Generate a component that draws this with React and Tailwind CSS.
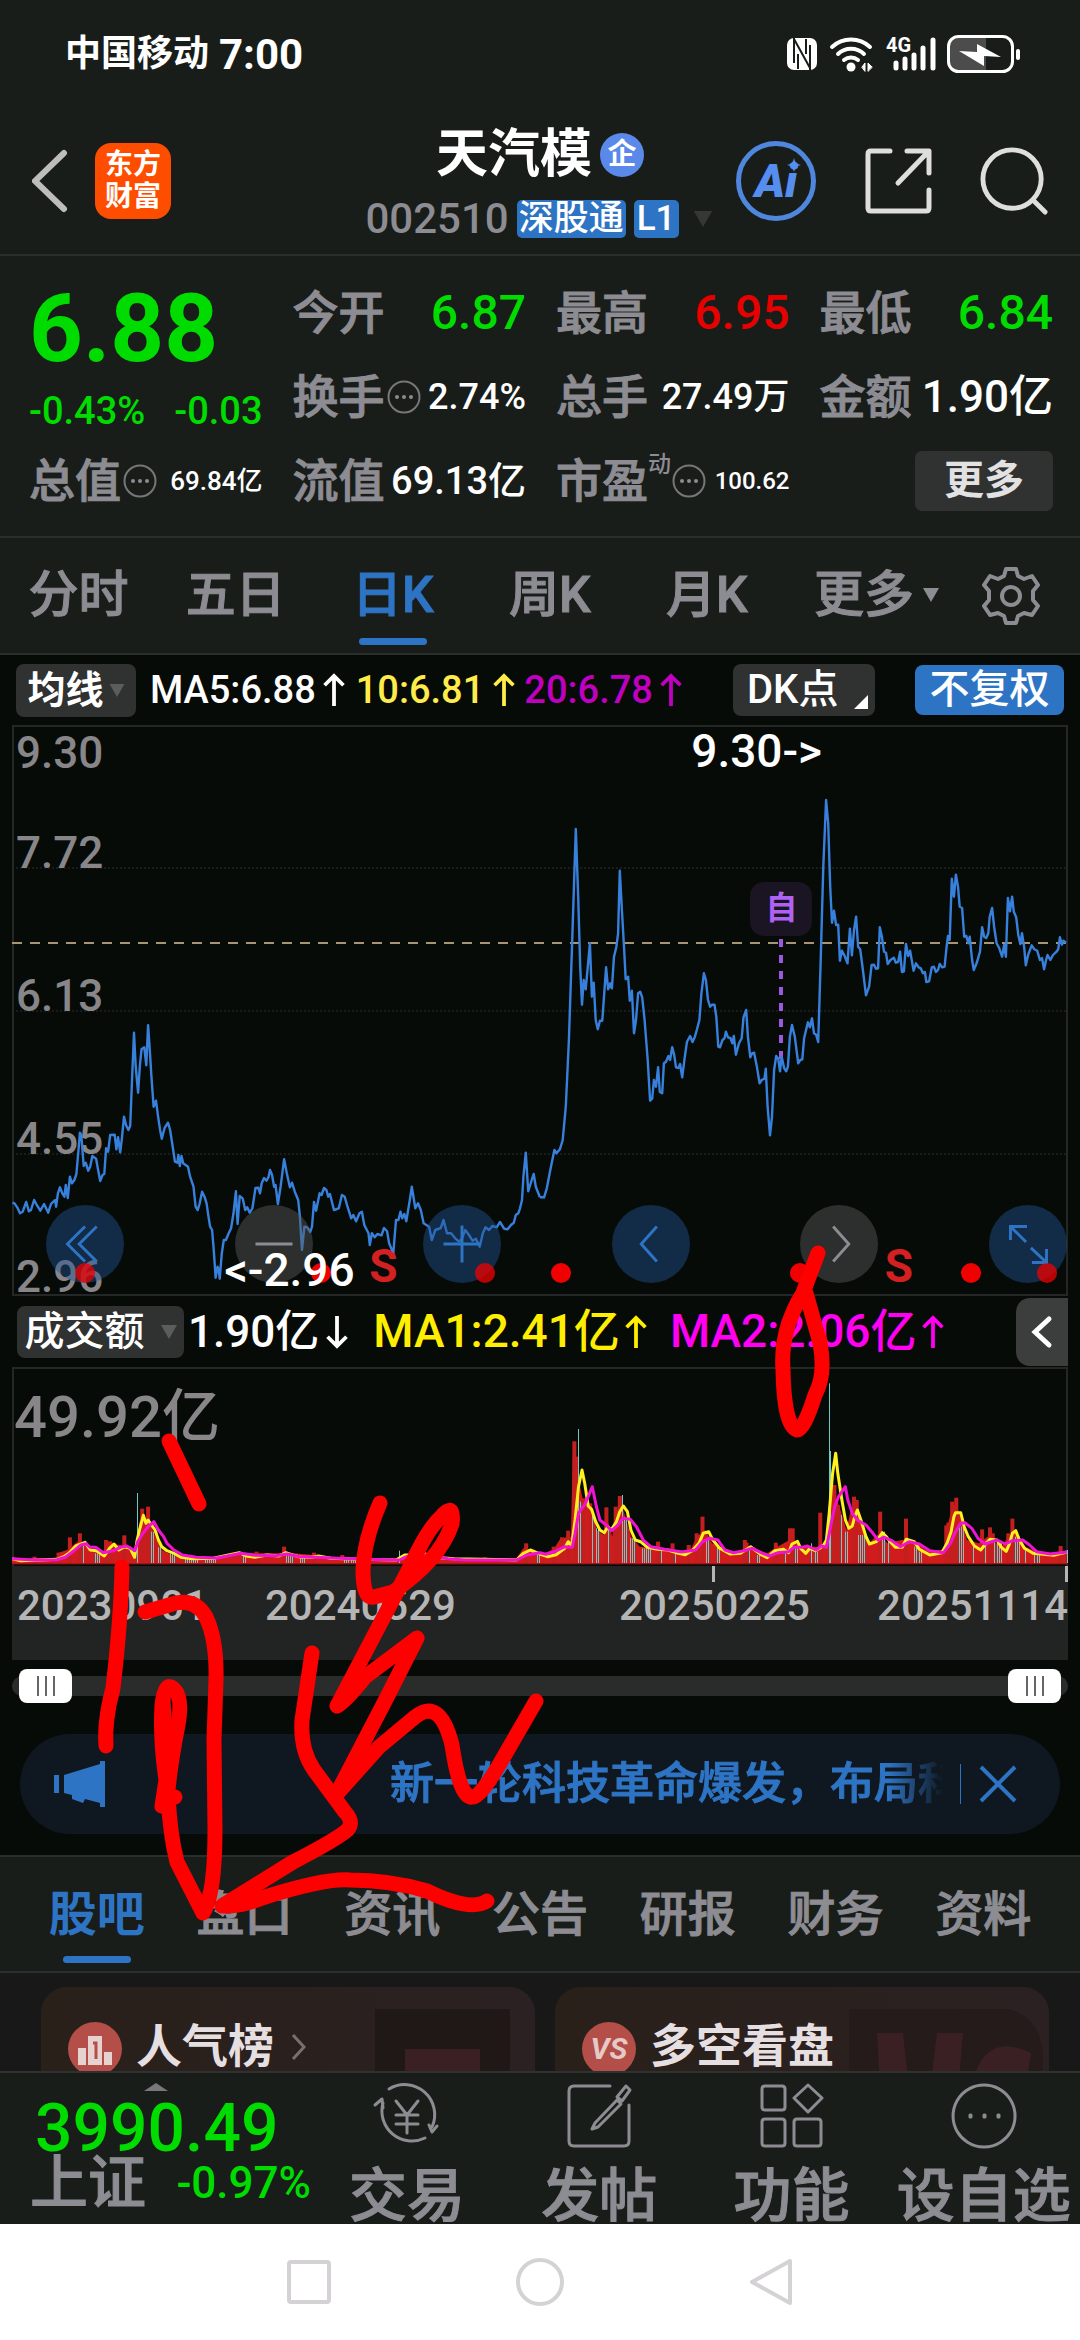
import React, { useState } from 'react'

const QUOTES = [
  { label: '今开', value: '6.87', style: 'text-[48px] text-[#00dc00]' },
  { label: '最高', value: '6.95', style: 'text-[48px] text-[#e60000]' },
  { label: '最低', value: '6.84', style: 'text-[48px] text-[#00dc00]' },
  { label: '换手', value: '2.74%', more: true, style: 'text-[36px] text-white' },
  { label: '总手', value: '27.49万', style: 'text-[36px] text-white' },
  { label: '金额', value: '1.90亿', style: 'text-[44px] text-white' },
  { label: '总值', value: '69.84亿', more: true, style: 'text-[26px] text-white' },
  { label: '流值', value: '69.13亿', style: 'text-[38px] text-white' },
  { label: '市盈', value: '100.62', more: true, sup: '动', style: 'text-[24px] text-white' }
]

const PERIODS = ['分时', '五日', '日K', '周K', '月K', '更多']
const SECTIONS = ['股吧', '盘口', '资讯', '公告', '研报', '财务', '资料']

// Chart samples sit on a 3x grid: [x, y, x, y, ...]
const PRICE_A = [36,608,42,610,50,622,58,640,66,635,76,606,84,634,90,630,99,600,108,617,117,632,128,612,140,638,148,612,155,605,160,600,163,620,168,580,174,562,181,580,187,590,191,555,197,594,203,530,209,550,216,540,222,522,228,450,232,398,236,405,243,498,249,488,256,512,262,500,268,468,279,476,284,505,291,543,298,525,303,522,308,445,314,455,320,405,333,404,338,448,343,412,349,457,354,415,360,350,366,375,373,390,378,378,383,250,389,98,394,200,401,278,406,200,411,148,419,142,425,196,430,76,435,150,439,220,446,320,453,302,459,350,465,390,470,416,478,384,488,368,494,390,500,430,508,485,515,488,518,465,522,498,527,468,532,490,546,500,552,530,562,560,568,620,574,630,580,610,587,575,594,590,600,610,604,640,610,680,616,690,620,740,624,800,626,833,632,800,635,808,638,836,644,760,650,720,656,720,664,700,671,685,678,640,685,574,690,672,696,588,705,596,712,630,718,622,725,638,733,625,742,564,750,563,755,580,760,550,767,534,774,542,780,530,784,510,790,524,796,560,800,555,807,612,815,560,825,478,833,520,842,562,848,548,856,575,866,600,871,650,877,750,884,680,892,682,901,696,906,680,912,606,918,632,928,580,934,585,941,564,948,570,953,590,958,582,970,630,984,625,993,585,1001,590,1009,620,1020,655,1026,645,1034,664,1044,640,1051,635,1058,675,1070,700,1074,735,1080,700,1088,712,1096,702,1108,706,1115,684,1124,694,1130,730,1142,760,1150,660,1157,660,1163,635,1168,655,1174,642,1180,664,1190,600,1196,560,1206,625,1214,610,1222,630,1230,670,1246,680,1254,720,1264,690,1280,684,1288,660,1298,700,1310,700,1322,715,1333,725,1342,715,1351,690,1362,705,1372,722,1382,716,1393,740,1402,700,1410,682,1420,690,1430,678,1442,682,1452,666,1464,686,1474,688,1484,675,1492,668,1498,645,1505,640,1510,625,1516,600,1520,530,1527,458,1534,574,1544,540,1550,522,1556,560,1568,592]
const PRICE_B = [0,1252,12,1252,20,1225,30,1170,42,1110,48,1120,58,1108,66,1080,75,980,84,780,93,500,104,147,111,350,117,560,122,674,127,600,133,628,139,560,145,490,151,650,156,608,162,720,168,748,174,722,181,722,186,650,192,562,198,628,204,610,209,625,215,530,222,500,227,460,232,272,238,390,244,500,249,598,256,590,261,662,267,632,273,760,279,720,285,640,291,635,297,652,304,720,313,840,320,962,326,956,331,900,337,920,343,862,348,936,355,940,360,850,366,845,373,828,378,840,384,802,390,825,395,862,402,864,407,852,413,892,420,835,427,785,436,768,443,786,450,770,456,748,463,720,469,640,476,580,482,600,488,660,494,680,500,674,507,674,512,710,518,800,523,802,530,780,536,775,540,755,546,772,553,774,559,790,563,768,569,824,578,790,586,775,591,712,599,690,604,770,611,832,616,820,622,818,630,860,638,910,644,900,652,896,656,866,661,980,668,1066,674,1010,680,870,686,828,692,836,697,874,702,830,709,864,715,874,720,860,726,770,732,735,740,770,750,850,756,840,762,838,767,775,778,727,784,742,790,715,796,760,802,764,808,786,815,550,823,260,831,60,837,130,843,320,848,428,854,392,860,435,866,434,871,542,877,512,885,528,893,550,900,446,906,526,912,450,918,410,924,500,930,508,938,570,947,646,956,620,963,555,970,554,976,566,982,565,987,442,993,470,999,515,1005,518,1010,552,1018,540,1028,533,1033,548,1040,546,1046,515,1051,576,1057,574,1063,492,1069,528,1075,512,1085,572,1092,550,1100,562,1106,565,1112,580,1118,576,1122,606,1130,604,1138,562,1144,560,1150,576,1156,570,1161,552,1168,562,1175,560,1181,500,1185,468,1190,480,1196,296,1202,350,1208,284,1214,320,1219,380,1226,384,1232,470,1238,468,1244,490,1248,470,1255,540,1260,570,1268,550,1278,515,1284,442,1290,470,1296,474,1302,460,1306,410,1313,384,1319,440,1326,490,1334,505,1342,530,1348,495,1353,530,1359,354,1365,394,1371,350,1376,395,1383,412,1389,465,1395,492,1400,460,1406,500,1411,556,1418,524,1428,496,1436,508,1444,512,1452,540,1458,534,1464,568,1470,540,1474,525,1482,540,1490,525,1500,515,1505,508,1510,472,1516,494,1520,482,1528,488]

const VOL_AREA = [35,660,100,655,165,655,170,638,195,630,225,605,255,612,265,628,300,640,305,605,345,615,368,618,390,640,398,610,405,545,425,540,440,560,455,600,470,630,500,645,560,655,640,650,700,640,740,640,820,640,850,640,910,645,1000,655,1150,658,1180,645,1260,645,1300,655,1500,655,1520,625,1545,630,1568,645,1608,628,1628,595,1658,590,1663,350,1676,400,1693,480,1718,500,1733,570,1753,585,1758,520,1778,590,1783,540,1803,480,1813,520,1833,590,1858,620,1908,625,1988,632,2008,625,2023,590,2048,570,2068,610,2128,635,2188,625,2228,640,2258,620,2293,600,2328,620,2368,620,2398,620,2406,500,2418,450,2438,500,2458,570,2473,500,2498,540,2523,610,2553,580,2578,610,2618,600,2648,600,2688,630,2743,630,2751,560,2768,490,2783,510,2808,600,2843,610,2868,590,2908,620,2928,590,2948,570,2978,620,3018,640,3098,635]
const VOL_UP = [[100,650],[170,638],[203,592],[232,580],[308,600],[320,604],[361,586],[413,506],[430,500],[452,605],[745,635],[825,620],[912,638],[994,645],[1408,652],[1528,610],[1608,620],[1632,592],[1650,572],[1668,304],[1673,350],[1695,475],[1714,490],[1761,502],[1788,500],[1800,468],[1911,605],[1953,610],[2000,615],[2023,580],[2040,530],[2163,600],[2168,608],[2253,608],[2294,565],[2302,565],[2382,518],[2423,435],[2433,495],[2480,470],[2488,480],[2556,515],[2631,536],[2748,556],[2754,548],[2765,485],[2777,473],[2852,568],[2875,562],[2883,580],[2928,580],[2940,536],[3080,618]]
// [from, to, top]
const VOL_DOWN = [[240,240,612],[276,288,640],[397,397,459],[438,444,575],[460,466,622],[494,508,640],[536,572,655],[594,624,656],[705,711,645],[830,850,645],[870,884,652],[1000,1030,655],[1158,1158,632],[1225,1235,650],[1558,1566,645],[1679,1679,267],[1685,1685,485],[1720,1720,520],[1732,1738,565],[1766,1766,560],[1807,1807,465],[1813,1819,540],[1830,1842,595],[1864,1888,625],[1920,1920,625],[1960,1960,635],[2050,2058,600],[2082,2090,620],[2174,2174,620],[2198,2204,645],[2280,2280,640],[2308,2314,620],[2354,2354,610],[2368,2374,635],[2406,2406,130],[2411,2411,333],[2441,2441,525],[2453,2459,575],[2492,2510,585],[2562,2568,575],[2580,2580,600],[2655,2661,620],[2668,2674,635],[2785,2797,560],[2826,2826,620],[2860,2860,605],[2888,2906,605],[2948,2960,590],[2978,2978,630],[3004,3018,640],[3098,3098,630]]
const VOL_MA1 = [35,656,60,662,120,660,165,658,185,650,200,640,220,618,247,607,262,630,280,632,303,648,318,625,331,612,345,630,362,620,378,625,391,652,398,600,405,570,416,526,424,550,430,540,440,555,450,570,460,600,470,620,485,632,505,640,525,652,560,656,620,655,660,646,695,638,715,648,740,652,775,645,810,648,830,638,850,645,875,652,905,652,925,648,960,655,1000,656,1050,658,1150,660,1175,645,1200,645,1235,642,1260,652,1320,656,1500,660,1520,640,1540,630,1568,642,1590,650,1615,644,1640,625,1650,605,1660,618,1670,540,1680,440,1690,390,1698,430,1708,498,1718,508,1730,545,1742,570,1755,578,1765,560,1775,570,1790,545,1800,515,1810,498,1822,515,1832,570,1845,600,1860,605,1880,622,1910,628,1940,630,1970,640,1990,644,2010,632,2030,610,2042,580,2058,575,2070,600,2090,625,2120,642,2150,640,2165,630,2180,620,2195,632,2212,645,2228,653,2250,632,2275,628,2290,638,2300,612,2316,604,2325,625,2340,640,2352,625,2368,632,2380,625,2392,615,2400,600,2408,520,2418,400,2427,340,2433,400,2445,480,2455,540,2465,565,2475,558,2482,530,2490,510,2500,540,2515,590,2525,612,2545,605,2562,578,2572,588,2585,605,2600,622,2620,622,2632,598,2655,605,2670,628,2700,645,2735,638,2750,610,2762,575,2770,530,2775,518,2790,518,2800,560,2812,590,2830,618,2848,630,2862,612,2875,598,2895,600,2908,622,2922,634,2932,610,2940,580,2950,572,2960,600,2975,625,3000,640,3060,646,3098,636]
const VOL_MA2 = [35,656,100,660,165,659,190,652,215,632,235,615,250,611,262,622,278,622,300,638,330,632,350,622,368,618,392,632,400,605,415,580,430,560,447,545,460,570,475,590,485,610,505,630,530,645,570,652,630,654,660,648,700,640,740,646,800,647,835,642,870,650,920,652,980,655,1060,658,1160,660,1180,650,1240,645,1300,656,1350,660,1500,660,1530,645,1568,638,1585,643,1610,635,1640,620,1662,622,1670,580,1680,520,1700,490,1720,440,1732,500,1742,540,1760,555,1776,572,1795,555,1808,535,1830,538,1848,560,1868,600,1890,620,1930,628,1980,636,2020,630,2040,605,2060,595,2085,600,2105,630,2130,638,2160,632,2185,625,2215,640,2235,648,2260,638,2290,635,2305,622,2330,622,2345,618,2370,630,2385,618,2400,622,2412,560,2424,500,2435,470,2455,440,2462,480,2475,520,2490,540,2515,555,2535,580,2550,600,2568,592,2590,602,2615,620,2640,605,2670,612,2700,632,2740,638,2760,610,2775,575,2790,550,2802,548,2822,565,2840,595,2860,612,2895,600,2920,612,2940,602,2970,600,2990,615,3010,635,3050,642,3098,636]

const plot = (samples, dx, dy) => {
  const out = []
  for (let i = 0; i < samples.length; i += 2) {
    out.push(`${((samples[i] + dx) / 2.904 - 12).toFixed(1)},${(samples[i + 1] / 3 + dy).toFixed(1)}`)
  }
  return out.join(' ')
}

const Caret = ({ className }) => (
  <svg viewBox="0 0 16 14" className={className} fill="currentColor"><path d="M0 0h16L8 14z" /></svg>
)

const Arrow = ({ down }) => (
  <svg viewBox="0 0 24 36" className="w-[24px] h-[34px] shrink-0" fill="none" stroke="currentColor" strokeWidth="4">
    <path d={down ? 'M12 1v32M2 23l10 10 10-10' : 'M12 35V3M2 13L12 3l10 10'} />
  </svg>
)

const MoreDots = () => (
  <svg viewBox="0 0 34 34" className="w-[34px] h-[34px] shrink-0" fill="none" stroke="#77777a" strokeWidth="2">
    <circle cx="17" cy="17" r="15.5" />
    <g fill="#8c8c92" stroke="none"><circle cx="10" cy="17" r="2" /><circle cx="17" cy="17" r="2" /><circle cx="24" cy="17" r="2" /></g>
  </svg>
)

const StatusBar = () => (
  <div className="h-[108px] pl-[65px] pr-[59px] flex items-center justify-between text-white font-bold">
    <div className="flex items-center gap-[10px]">
      <span className="text-[36px]">中国移动</span>
      <span className="text-[42px]">7:00</span>
    </div>
    <div className="flex items-center gap-[11px]">
      <svg viewBox="0 0 32 34" className="w-[32px] h-[34px]">
        <rect x="1" y="1" width="30" height="32" rx="7" fill="#fff" />
        <path d="M8 1V26M24 8V33M8 2L24 31M12 17V32M20 2V17" stroke="#191d1a" strokeWidth="2" fill="none" />
      </svg>
      <svg viewBox="0 0 46 36" className="w-[46px] h-[36px]" fill="none" stroke="#fff" strokeWidth="4" strokeLinecap="round">
        <path d="M3 11a28 28 0 0 1 38 0M9 18a19 19 0 0 1 26 0M15 24a11 11 0 0 1 14 0" />
        <circle cx="22" cy="31" r="4.500" fill="#fff" stroke="none" />
        <path d="M33 31l3-4v8zM43 31l-4-4v8z" fill="#fff" strokeWidth="1" />
      </svg>
      <div className="relative w-[50px] h-[36px]">
        <span className="absolute left-0 -top-[2px] text-[20px] leading-[22px]">4G</span>
        <svg viewBox="0 0 50 36" className="w-[50px] h-[36px]" stroke="#fff" strokeWidth="5" strokeLinecap="round">
          <path d="M10 27v5M19 23v9M28 19v13M37 12v20M47 4v28" />
        </svg>
      </div>
      <svg viewBox="0 0 74 38" className="w-[74px] h-[38px]">
        <path d="M12 2h27v34H12Q2 36 2 26V12Q2 2 12 2z" fill="#4b4c4b" />
        <rect x="1.500" y="1.500" width="64" height="35" rx="10" fill="none" stroke="#fff" strokeWidth="3" />
        <path d="M12 16l18 1V9l24 13-17-1v10z" fill="#fff" />
        <rect x="69" y="14" width="4" height="11" rx="2" fill="#fff" />
      </svg>
    </div>
  </div>
)

const Header = () => (
  <header className="h-[148px] px-[32px] grid grid-cols-[1fr_auto_1fr] items-center border-b-2 border-[#2b2e2c]">
    <div className="flex items-center gap-[26px]">
      <button aria-label="返回">
        <svg viewBox="3 0 37 64" className="w-[37px] h-[64px]" fill="none" stroke="#bdbdbd" strokeWidth="6" strokeLinecap="round"><path d="M35 4L6 32l29 28" /></svg>
      </button>
      <a href="#home" className="w-[76px] h-[76px] rounded-[16px] bg-[#ff4d00] text-white text-[28px] leading-[32px] font-bold text-center pt-[6px]">东方<br />财富</a>
    </div>
    <div className="pt-[12px] text-center">
      <h1 className="flex items-center justify-center gap-[8px] text-white text-[52px] leading-[64px] font-bold">
        天汽模
        <span className="w-[44px] h-[44px] rounded-full bg-[#5a89ea] text-[29px] leading-[42px]">企</span>
      </h1>
      <div className="flex items-center justify-center gap-[8px] h-[64px] text-[35px] leading-[38px]">
        <span className="text-[42px] text-[#8c8c92] font-medium">002510</span>
        <span className="rounded-[5px] px-[2px] bg-[#2e74c4] text-white font-medium">深股通</span>
        <span className="rounded-[5px] px-[3px] bg-[#2e74c4] text-white font-medium">L1</span>
        <Caret className="ml-[4px] w-[24px] h-[16px] text-[#363836]" />
      </div>
    </div>
    <div className="flex items-center justify-end gap-[48px]">
      <button className="relative w-[80px] h-[80px] rounded-full border-[5px] border-[#4f86de] text-[#568ef0] text-[46px] leading-[68px] font-black italic">
        Ai
        <svg viewBox="0 0 14 14" className="absolute right-[10px] top-[12px] w-[14px] h-[14px]" fill="currentColor"><path d="M7 0q1 6 7 7-6 1-7 7-1-6-7-7 6-1 7-7z" /></svg>
      </button>
      <button aria-label="分享">
        <svg viewBox="0 0 68 68" className="w-[68px] h-[68px]" fill="none" stroke="#dedede" strokeWidth="5" strokeLinecap="round" strokeLinejoin="round">
          <path d="M26 4H7Q4 4 4 7v54q0 3 3 3h55q3 0 3-3V43M43 4h22v22M64 5L34 36" />
        </svg>
      </button>
      <button aria-label="搜索">
        <svg viewBox="0 0 70 70" className="w-[68px] h-[68px]" fill="none" stroke="#dedede" strokeWidth="5" strokeLinecap="round"><circle cx="33" cy="33" r="30" /><path d="M55 55l12 12" /></svg>
      </button>
    </div>
  </header>
)

const QuoteCell = ({ item }) => (
  <div className="flex items-center justify-between h-[84px] whitespace-nowrap">
    <div className="flex items-center gap-[2px]">
      <span className="relative text-[46px] text-[#8c8c92] font-medium [-webkit-text-stroke-width:1px]">
        {item.label}
        {item.sup && <sup className="absolute left-full top-[6px] text-[23px] leading-[24px] [-webkit-text-stroke-width:0]">{item.sup}</sup>}
      </span>
      {item.sup && <span className="w-[20px]" />}
      {item.more && <MoreDots />}
    </div>
    <span className={`font-medium ${item.style}`}>{item.value}</span>
  </div>
)

const QuotePanel = () => (
  <section className="pl-[29px] pr-[27px] pt-[15px] pb-[13px] grid grid-cols-4 gap-x-[30px] border-b-2 border-[#2b2e2c]">
    <div className="row-span-2 pt-[14px] text-[#00dc00]">
      <div className="text-[94px] leading-[88px] font-bold">6.88</div>
      <div className="mt-[10px] flex justify-between text-[38px] leading-[56px] font-medium whitespace-nowrap"><span>-0.43%</span><span>-0.03</span></div>
    </div>
    {QUOTES.map((item) => <QuoteCell key={item.label} item={item} />)}
    <div className="flex items-center justify-end">
      <button className="w-[138px] h-[60px] rounded-[7px] bg-[#303131] text-[#e2e2e2] text-[40px] leading-[56px] font-bold">更多</button>
    </div>
  </section>
)

const PeriodTabs = ({ active, onPick }) => (
  <nav className="h-[117px] grid grid-cols-[repeat(6,8fr)_7fr] border-b-2 border-[#2b2e2c]">
    {PERIODS.map((name) => (
      <button key={name} onClick={() => onPick(name)} className={`relative text-[50px] font-medium whitespace-nowrap [-webkit-text-stroke-width:1px] ${active === name ? 'text-[#2e74c4]' : 'text-[#8c8c92]'}`}>
        {name}
        {name === '更多' && <Caret className="absolute right-[4px] top-[50px] w-[16px] h-[14px]" />}
        {active === name && <i className="absolute left-1/2 -translate-x-1/2 bottom-[8px] w-[68px] h-[7px] rounded-full bg-[#2e74c4]" />}
      </button>
    ))}
    <button aria-label="设置" className="flex items-center justify-center">
      <svg viewBox="0 0 60 60" className="w-[60px] h-[60px]" fill="none" stroke="#8c8c92" strokeWidth="4" strokeLinejoin="round">
        <path d="M25 3h10l2 7 6 3 8-3 6 9-5 6v9l5 6-6 9-8-2-6 3-2 7H25l-2-7-6-3-8 2-6-9 5-6v-9l-5-6 6-9 8 3 6-3z" />
        <circle cx="30" cy="30" r="9" />
      </svg>
    </button>
  </nav>
)

const MaBar = () => (
  <div className="h-[70px] pl-[16px] pr-[16px] flex items-center font-medium text-[38px] whitespace-nowrap">
    <button className="w-[120px] h-[53px] rounded-[8px] bg-[#303131] text-white font-bold leading-[50px] flex items-center justify-center gap-[5px]">
      均线<Caret className="w-[16px] h-[13px] text-[#5b5c5b]" />
    </button>
    <span className="ml-[14px] flex items-center gap-[6px] text-white">MA5:6.88<Arrow /></span>
    <span className="ml-[10px] flex items-center gap-[8px] text-[#ffec4a]">10:6.81<Arrow /></span>
    <span className="ml-[8px] flex items-center gap-[6px] text-[#c000c0]">20:6.78<Arrow /></span>
    <button className="relative ml-auto w-[142px] h-[52px] rounded-[8px] bg-[#303131] text-white text-[40px] leading-[48px] pl-[14px] text-left">
      DK点
      <svg viewBox="0 0 14 14" className="absolute right-[7px] bottom-[7px] w-[14px] h-[14px]" fill="#fff"><path d="M14 0v14H0z" /></svg>
    </button>
    <button className="ml-[40px] w-[149px] h-[50px] rounded-[8px] bg-[#2e74c4] text-white text-[40px] leading-[46px]">不复权</button>
  </div>
)

const TOOLS = [
  { name: '最早', blue: true, d: 'M40 22L22 40l18 18M52 22L34 40l18 18' },
  { name: '缩小', d: 'M21 40h38' },
  { name: '放大', blue: true, d: 'M21 40h38M40 21v38' },
  { name: '向左', blue: true, d: 'M46 22L30 40l16 18' },
  { name: '向右', d: 'M34 22l16 18-16 18' },
  { name: '全屏', blue: true, d: 'M38 38L22 22M22 36V22h17M43 44l16 15M59 45v14H44' }
]

const Y_LABELS = [
  { text: '9.30', style: 'top-0' },
  { text: '7.72', style: 'top-[100px]' },
  { text: '6.13', style: 'top-[243px]' },
  { text: '4.55', style: 'top-[386px]' },
  { text: '2.96', style: 'top-[524px]' }
]

const PriceChart = () => (
  <div className="relative mx-[12px] h-[571px] border-2 border-[#242725] text-[46px] leading-[52px] font-medium">
    <svg viewBox="0 0 1056 570" preserveAspectRatio="none" className="absolute -left-[2px] -top-[2px] w-[calc(100%+4px)] h-[570px]" fill="none">
      <path d="M0 143h1056M0 286h1056M0 429h1056" stroke="#2c2f2d" strokeDasharray="2 2" />
      <path d="M0 218h1056" stroke="#a89574" strokeWidth="2" strokeDasharray="10 8" />
    </svg>
    {Y_LABELS.map((l) => <span key={l.text} className={`absolute left-[2px] text-[44px] text-[#888689] ${l.style}`}>{l.text}</span>)}
    <svg viewBox="0 0 1056 570" preserveAspectRatio="none" className="absolute -left-[2px] -top-[2px] w-[calc(100%+4px)] h-[570px]" fill="none" stroke="#3781dc" strokeWidth="2.400" strokeLinejoin="round">
      <path d="M769 214V334" stroke="#9d58dc" strokeWidth="4" strokeDasharray="8 8" />
      <polyline points={plot(PRICE_A, 0, 275)} />
      <polyline points={plot(PRICE_B, 1568, 55)} />
    </svg>
    <span className="absolute left-[64%] -top-[2px] ml-[4px] text-white">9.30-&gt;</span>
    <span className="absolute left-[70%] top-[155px] w-[62px] h-[54px] rounded-[14px] bg-[#1b1422] text-center text-[32px] leading-[52px] font-bold text-[#ae62f4]">自</span>
    <div className="absolute left-[32px] -right-[1px] top-[478px] flex justify-between">
      {TOOLS.map((tool) => (
        <button key={tool.name} aria-label={tool.name} className={`w-[78px] h-[78px] rounded-full ${tool.blue ? 'bg-[#225292]/45' : 'bg-[#5a5a5a]/45'}`}>
          <svg viewBox="0 0 80 80" className="w-[78px] h-[78px]" fill="none" stroke={tool.blue ? '#2e74c4' : '#8c8c92'} strokeWidth="3"><path d={tool.d} /></svg>
        </button>
      ))}
    </div>
    <svg viewBox="0 0 1056 24" preserveAspectRatio="none" className="absolute -left-[2px] top-[535px] w-[calc(100%+4px)] h-[24px]" fill="#f00000">
      <g opacity="0.75"><circle cx="73" cy="11" r="10" /><circle cx="473" cy="11" r="10" /><circle cx="1035" cy="11" r="10" /></g>
      <circle cx="309" cy="11" r="10" /><circle cx="549" cy="11" r="10" /><circle cx="788" cy="11" r="10" /><circle cx="959" cy="11" r="10" />
    </svg>
    <span className="absolute left-[20%] top-[517px] text-white">&lt;-2.96</span>
    <span className="absolute left-[33%] top-[513px] ml-[8px] font-bold text-[#d32020]">S</span>
    <span className="absolute left-[82%] top-[513px] ml-[8px] font-bold text-[#d32020]">S</span>
  </div>
)

const VolumeBar = () => (
  <div className="h-[71px] pl-[17px] pr-[12px] flex items-center text-[46px] font-medium whitespace-nowrap">
    <button className="w-[167px] h-[52px] rounded-[8px] bg-[#303131] text-white text-[40px] leading-[48px] flex items-center justify-center gap-[16px]">
      成交额<Caret className="w-[16px] h-[14px] text-[#5b5c5b]" />
    </button>
    <span className="ml-[4px] flex items-center gap-[6px] text-[44px] text-white">1.90亿<Arrow down /></span>
    <span className="ml-[24px] flex items-center gap-[4px] text-[#ffee00]">MA1:2.41亿<Arrow /></span>
    <span className="ml-[22px] flex items-center gap-[4px] text-[#ff00f0]">MA2:2.06亿<Arrow /></span>
    <button aria-label="收起" className="ml-auto w-[52px] h-[68px] rounded-l-[14px] bg-[#3c3e3d] flex items-center justify-center">
      <svg viewBox="0 0 22 34" className="w-[22px] h-[34px]" fill="none" stroke="#fff" strokeWidth="5" strokeLinecap="round"><path d="M18 4L4 17l14 13" /></svg>
    </button>
  </div>
)

const VolumeChart = () => (
  <div className="relative mx-[12px] h-[199px] border-2 border-b-0 border-[#242725]">
    <span className="absolute left-0 top-[8px] text-[58px] leading-[80px] font-medium text-[#888689]">49.92亿</span>
    <svg viewBox="0 0 1056 199" preserveAspectRatio="none" className="absolute -left-[2px] -top-[2px] w-[calc(100%+4px)] h-[199px]" fill="none">
      <polygon fill="#d01c1c" points={`0,197 ${plot(VOL_AREA, 0, -27)} 1055,197`} />
      {VOL_UP.map(([x, top]) => <rect key={x} x={x / 2.904 - 14} y={top / 3 - 27} width="4" height={(670 - top) / 3} fill="#c41f1f" />)}
      {VOL_DOWN.map(([from, to, top]) => {
        const bars = []
        for (let x = from; x <= to; x += 6) bars.push(<path key={x} d={`M${Math.round(x / 2.904) - 12}.5 ${top / 3 - 27}V196`} stroke="#6fc9c9" strokeWidth="1" />)
        return <g key={from}>{bars}</g>
      })}
      <path d="M0 197h1056" stroke="#7c1010" />
      <polyline points={plot(VOL_MA1, 0, -27)} stroke="#fff01e" strokeWidth="3" strokeLinejoin="round" />
      <polyline points={plot(VOL_MA2, 0, -27)} stroke="#f013d4" strokeWidth="3" strokeLinejoin="round" />
    </svg>
  </div>
)

const RangeThumb = ({ label, value }) => (
  <input type="range" aria-label={label} defaultValue={value} className="absolute left-[7px] right-[7px] top-0 w-[calc(100%-14px)] h-[34px] appearance-none bg-transparent pointer-events-none [&::-webkit-slider-thumb]:pointer-events-auto [&::-webkit-slider-thumb]:appearance-none [&::-webkit-slider-thumb]:w-[53px] [&::-webkit-slider-thumb]:h-[34px] [&::-webkit-slider-thumb]:rounded-[8px] [&::-webkit-slider-thumb]:bg-white [&::-webkit-slider-thumb]:bg-[linear-gradient(90deg,#666_2px,#fff_2px,#fff_8px,#666_8px,#666_10px,#fff_10px,#fff_16px,#666_16px)] [&::-webkit-slider-thumb]:bg-[length:18px_20px] [&::-webkit-slider-thumb]:bg-no-repeat [&::-webkit-slider-thumb]:bg-center" />
)

const TimeAxis = () => (
  <>
    <div className="relative mx-[12px] h-[94px] pl-[5px] pt-[13px] bg-[#222423] grid grid-cols-[248fr_354fr_258fr_auto] text-[42px] leading-[54px] font-medium text-[#b5b5b5]">
      <span>20230901</span><span>20240529</span><span>20250225</span><span>20251114</span>
      <i className="absolute left-[66%] top-0 ml-[3px] w-[3px] h-[16px] bg-[#b5b5b5]" />
      <i className="absolute right-0 top-0 w-[3px] h-[16px] bg-[#b5b5b5]" />
    </div>
    <div className="relative mx-[12px] mt-[9px] h-[34px] flex items-center">
      <div className="w-full h-[20px] rounded-full bg-[#2a2c2b]" />
      <RangeThumb label="起始日期" value={0} />
      <RangeThumb label="结束日期" value={100} />
    </div>
  </>
)

const Notice = () => (
  <div className="mx-[20px] mt-[31px] h-[100px] pl-[34px] pr-[42px] rounded-full bg-[#0f1820] flex items-center">
    <svg viewBox="0 0 52 46" className="w-[52px] h-[46px] shrink-0" fill="#2e74c4"><path d="M0 14h5v18H0zM10 14L46 3V0h5v46h-5v-4l-15-4-2 4-11-4v-4l-8-2z" /></svg>
    <p className="ml-[284px] flex-1 overflow-hidden whitespace-nowrap text-[44px] leading-[60px] font-medium [-webkit-text-stroke-width:1px] text-[#2e74c4] [mask-image:linear-gradient(90deg,#000_90%,transparent)]">新一轮科技革命爆发，布局科</p>
    <i className="ml-[16px] w-px h-[40px] bg-[#2e74c4]" />
    <button aria-label="关闭" className="ml-[17px]">
      <svg viewBox="0 0 40 40" className="w-[40px] h-[40px]" fill="none" stroke="#2e74c4" strokeWidth="4"><path d="M3 3l34 34M37 3L3 37" /></svg>
    </button>
  </div>
)

const SectionTabs = ({ active, onPick }) => (
  <nav className="h-[118px] px-[23px] grid grid-cols-7 bg-[#191d1a] border-y-2 border-[#2b2e2c]">
    {SECTIONS.map((name) => (
      <button key={name} onClick={() => onPick(name)} className={`relative pt-[2px] text-[48px] whitespace-nowrap ${active === name ? 'font-bold text-[#2e74c4]' : 'font-medium text-[#8c8c92] [-webkit-text-stroke-width:1px]'}`}>
        {name}
        {active === name && <i className="absolute left-1/2 -translate-x-1/2 bottom-[8px] w-[68px] h-[7px] rounded-full bg-[#2e74c4]" />}
      </button>
    ))}
  </nav>
)

const Cards = () => (
  <div className="h-[98px] overflow-hidden bg-[#181818] pl-[41px] pr-[31px] pt-[14px] flex gap-[20px] text-[46px] leading-[60px] font-bold text-[#e6dfe1]">
    <a href="#rank" className="relative flex-1 h-[160px] rounded-[26px] overflow-hidden bg-linear-to-r from-[#29201a] to-[#2b2122] pl-[27px] pt-[29px] flex items-start">
      <svg viewBox="0 0 490 160" className="absolute right-0 top-0 h-[160px]"><path d="M330 22h135v138h-30V62h-75v98h-30z" fill="#1f1817" /><path d="M360 62h75v98h-75z" fill="#3a2022" /></svg>
      <svg viewBox="0 0 54 54" className="relative mt-[6px] w-[54px] h-[54px]"><circle cx="27" cy="27" r="27" fill="#b34f48" /><path d="M10 26h8v17h-8zM20 14h14v29H20zM36 30h8v13h-8z" fill="#e6d3d0" /><path d="M25 21h3v16" stroke="#b34f48" strokeWidth="3" fill="none" /></svg>
      <span className="relative ml-[14px]">人气榜</span>
      <svg viewBox="0 0 16 28" className="relative ml-[17px] mt-[17px] w-[16px] h-[28px]" fill="none" stroke="#76706f" strokeWidth="3"><path d="M2 2l11 12L2 26" /></svg>
    </a>
    <a href="#versus" className="relative flex-1 h-[160px] rounded-[26px] overflow-hidden bg-linear-to-r from-[#29201a] to-[#2b2122] pl-[27px] pt-[29px] flex items-start">
      <svg viewBox="0 0 490 160" className="absolute right-0 top-0 h-[160px]"><path d="M290 22h160q34 10 34 50v88H290z" fill="#241b1a" /><path d="M318 46h26l12 114h-32zM404 46h-26l-14 114h30zM472 66q-54-26-62 50l8 44h20l-2-44q10-30 30-12z" fill="#3a2022" /></svg>
      <span className="relative mt-[6px] w-[54px] h-[54px] rounded-full bg-[#b34f48] text-center text-[30px] leading-[54px] italic text-[#e6c9c6]">VS</span>
      <span className="relative ml-[14px]">多空看盘</span>
    </a>
  </div>
)

const ACTIONS = [
  { name: '交易', d: 'M17 8A30 30 0 0 1 60 46M53 57A30 30 0 0 1 11 22M3 24l7-6 1 9M65 45l-5 6-3-7M24 20l11 14 11-14M35 34v18M24 34h22M24 43h22' },
  { name: '发帖', d: 'M46 5H10Q5 5 5 10v50q0 5 5 5h50q5 0 5-5V24M62 5l4 4-8 11-5-4zM53 19l4 4-23 23-6 2 3-6z' },
  { name: '功能', d: 'M8 5h17q3 0 3 3v18q0 3-3 3H8q-3 0-3-3V8q0-3 3-3zM8 38h17q3 0 3 3v21q0 3-3 3H8q-3 0-3-3V41q0-3 3-3zM40 38h21q3 0 3 3v21q0 3-3 3H40q-3 0-3-3V41q0-3 3-3zM51 4l14 13-14 14-14-14z' },
  { name: '设自选', d: 'M35 4a31 31 0 1 0 .1 0zM21 34h1v2h-1zM35 34h1v2h-1zM49 34h1v2h-1z' }
]

const BottomBar = () => (
  <div className="h-[153px] overflow-hidden border-t-2 border-[#2f3230] bg-[#191d1a] flex whitespace-nowrap font-medium">
    <div className="w-[311px] shrink-0 pl-[30px]">
      <svg viewBox="0 0 24 8" className="ml-[114px] mt-[10px] w-[24px] h-[8px]" fill="#77777c"><path d="M12 0l12 8H0z" /></svg>
      <div className="pl-[5px] mt-[6px] text-[66px] leading-[64px] text-[#00dc00]">3990.49</div>
      <div className="flex items-center justify-between leading-[44px]"><span className="text-[58px] text-[#8c8c92] [-webkit-text-stroke-width:1px]">上证</span><span className="text-[44px] text-[#00dc00]">-0.97%</span></div>
    </div>
    {ACTIONS.map((action) => (
      <button key={action.name} className="flex-1 flex flex-col items-center pt-[8px] text-[58px] leading-[70px] text-[#8c8c92]">
        <svg viewBox="0 0 70 70" className="w-[70px] h-[70px] shrink-0" fill="none" stroke="currentColor" strokeWidth="3" strokeLinejoin="round" strokeLinecap="round"><path d={action.d} /></svg>
        <span className="mt-[10px] [-webkit-text-stroke-width:1px]">{action.name}</span>
      </button>
    ))}
  </div>
)

const SystemNav = () => (
  <div className="h-[116px] bg-white flex items-center justify-center gap-[183px]">
    <button aria-label="最近任务"><svg viewBox="0 0 48 48" className="w-[48px] h-[48px]" fill="none" stroke="#d5d2d5" strokeWidth="4"><rect x="4" y="4" width="40" height="40" rx="2" /></svg></button>
    <button aria-label="主屏幕"><svg viewBox="0 0 48 48" className="w-[48px] h-[48px]" fill="none" stroke="#d5d2d5" strokeWidth="4"><circle cx="24" cy="24" r="22" /></svg></button>
    <button aria-label="返回上级"><svg viewBox="0 0 48 48" className="w-[48px] h-[48px]" fill="none" stroke="#d5d2d5" strokeWidth="4" strokeLinejoin="round"><path d="M43 3v42L5 24z" /></svg></button>
  </div>
)

// Freehand pen marks drawn over the page
const PenMarks = () => (
  <svg viewBox="0 0 1080 2340" className="absolute inset-x-0 top-0 w-full pointer-events-none" fill="none" stroke="#ff0000" strokeWidth="15" strokeLinecap="round" strokeLinejoin="round">
    <path d="M169 1441L199 1504" />
    <path d="M122 1567Q121 1620 113 1688Q104 1722 106 1746" />
    <path d="M145 1612L176 1603Q196 1599 206 1617Q217 1640 216 1680L214 1740L215 1830Q215 1895 203 1913L177 1862Q170 1835 168 1795" />
    <path d="M175 1797L165 1798L162 1806L166 1780Q160 1740 162 1705Q165 1680 174 1689Q183 1697 178 1725Q170 1765 167 1800" />
    <path d="M163 1700L168 1780" />
    <path d="M380 1503Q364 1540 363 1570Q363 1600 374 1597L393 1592Q440 1560 452 1524Q455 1500 440 1518Q427 1530 410 1567L337 1706Q345 1702 365 1677L417 1638L384 1703L336 1795L379 1747L415 1717Q440 1697 452 1745Q460 1800 473 1797Q480 1797 499 1765L536 1701" />
    <path d="M312 1653L302 1720Q300 1750 314 1770L345 1812Q356 1824 345 1832Q330 1843 293 1862L222 1906Q240 1907 262 1898Q325 1878 350 1880Q390 1880 427 1891Q470 1912 487 1901" />
    <path d="M818 1253L803 1293Q780 1330 783 1370Q784 1425 797 1430Q804 1430 815 1395Q826 1375 820 1343L806 1293" />
  </svg>
)

export default function App() {
  const [period, setPeriod] = useState('日K')
  const [section, setSection] = useState('股吧')

  return (
    <div className="relative min-h-screen overflow-hidden bg-[#191d1a] font-['Roboto','Noto_Sans_CJK_SC',sans-serif]">
      <StatusBar />
      <Header />
      <QuotePanel />
      <PeriodTabs active={period} onPick={setPeriod} />
      <main className="bg-[#070b08] pb-[21px]">
        <MaBar />
        <PriceChart />
        <VolumeBar />
        <VolumeChart />
        <TimeAxis />
        <Notice />
      </main>
      <SectionTabs active={section} onPick={setSection} />
      <Cards />
      <BottomBar />
      <SystemNav />
      <PenMarks />
    </div>
  )
}
